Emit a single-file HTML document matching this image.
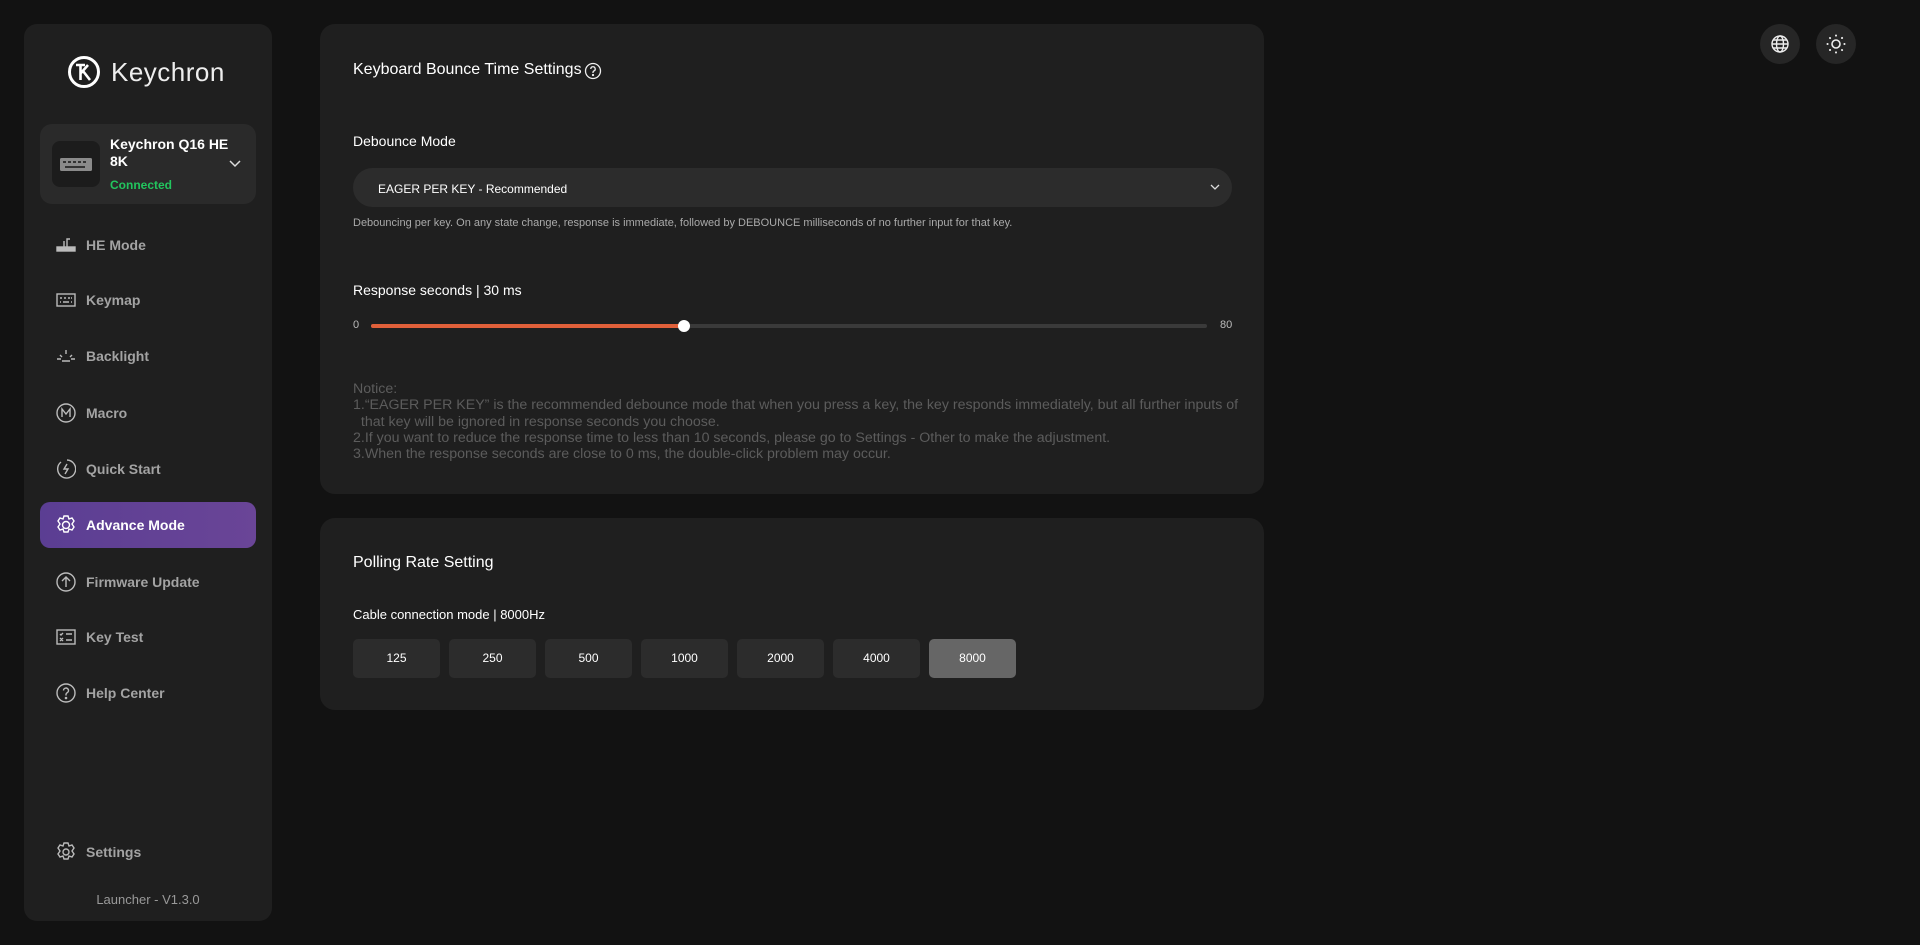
<!DOCTYPE html>
<html><head><meta charset="utf-8"><style>
*{box-sizing:border-box;margin:0;padding:0}
body{width:1920px;height:945px;background:#121212;font-family:"Liberation Sans",sans-serif;color:#fff;position:relative;overflow:hidden}
.side{position:absolute;left:24px;top:24px;width:248px;height:897px;background:#1f1f1f;border-radius:13px}
.logo{position:absolute;left:67px;top:55px;display:flex;align-items:center}
.logo span{font-size:26px;color:#eee;margin-left:10px;letter-spacing:.5px}
.dev{position:absolute;left:40px;top:124px;width:216px;height:80px;background:#2a2a2a;border-radius:12px}
.devic{position:absolute;left:12px;top:17px;width:48px;height:46px;background:#1c1c1c;border-radius:8px}
.devt{position:absolute;left:70px;top:12px;font-size:14px;font-weight:bold;line-height:17px}
.conn{position:absolute;left:70px;top:54px;font-size:12px;font-weight:bold;color:#22c55e}
.nav{position:absolute;left:40px;width:216px;height:46px;display:flex;align-items:center;padding-left:16px;font-size:14px;font-weight:bold;color:#a3a3a3}
.nav svg{width:20px;height:20px;margin-right:10px;flex:none}
.nav.act{background:linear-gradient(90deg,#5b3e93,#6a4597);color:#fff;border-radius:10px}
.card{position:absolute;left:320px;width:944px;background:#1f1f1f;border-radius:15px}
.t16{position:absolute;font-size:16px}
.t14{position:absolute;font-size:14px}
.sel{position:absolute;left:33px;top:144px;width:879px;height:39px;background:#2c2c2c;border-radius:20px;font-size:12px;padding:14px 0 0 25px}
.btn{position:absolute;top:121px;width:87px;height:39px;background:#2c2c2c;border-radius:5px;font-size:12px;text-align:center;line-height:39px}
.circ{position:absolute;top:24px;width:40px;height:40px;border-radius:50%;background:#262626;display:flex;align-items:center;justify-content:center}
</style></head><body>
<div class="side">
</div>
<div class="logo">
<svg width="34" height="34" viewBox="0 0 34 34"><circle cx="17" cy="17" r="14.5" fill="none" stroke="#fff" stroke-width="3"/><path d="M9 10h9M13.5 10v15M14 18l7-8M16 16l7 9" stroke="#fff" stroke-width="2.6" fill="none"/></svg>
<span>Keychron</span></div>
<div class="dev"><div class="devic"><svg width="48" height="46" viewBox="0 0 48 46"><rect x="8" y="17" width="32" height="13" rx="1.5" fill="#8a8a8a"/><g fill="#333"><rect x="11" y="20" width="3" height="2"/><rect x="16" y="20" width="3" height="2"/><rect x="21" y="20" width="3" height="2"/><rect x="26" y="20" width="3" height="2"/><rect x="31" y="20" width="3" height="2"/><rect x="13" y="25" width="20" height="2"/></g></svg></div>
<div class="devt">Keychron Q16 HE<br>8K</div><div class="conn">Connected</div>
<svg style="position:absolute;left:189px;top:36px" width="12" height="8" viewBox="0 0 12 8"><path d="M1 1l5 5 5-5" stroke="#ddd" stroke-width="1.5" fill="none"/></svg></div>

<div class="nav" style="top:222px"><svg viewBox="0 0 20 20" fill="none" stroke="#bbb" stroke-width="1.4"><rect x="1" y="12" width="18" height="4" fill="#bbb"/><path d="M8 12V6M11 12V4h3"/></svg>HE Mode</div>
<div class="nav" style="top:277px"><svg viewBox="0 0 20 20" fill="none" stroke="#bbb" stroke-width="1.4"><rect x="1" y="4" width="18" height="12"/><path d="M4 8h2M8 8h2M12 8h2M15 8h1M4 12h1M7 12h6M15 12h1"/></svg>Keymap</div>
<div class="nav" style="top:333px"><svg viewBox="0 0 20 20" fill="none" stroke="#bbb" stroke-width="1.4"><path d="M10 4v4M4 9l2 2M16 9l-2 2M1 13h4M15 13h4M6 15h8"/></svg>Backlight</div>
<div class="nav" style="top:390px"><svg viewBox="0 0 20 20" fill="none" stroke="#bbb" stroke-width="1.4"><circle cx="10" cy="10" r="9"/><path d="M6 14V6l4 5 4-5v8"/></svg>Macro</div>
<div class="nav" style="top:446px"><svg viewBox="0 0 20 20" fill="none" stroke="#bbb" stroke-width="1.4"><path d="M5 3a9 9 0 1 0 6-2"/><path d="M11 5l-3 5h4l-3 5"/></svg>Quick Start</div>
<div class="nav act" style="top:502px"><svg viewBox="0 0 20 20" fill="none" stroke="#fff" stroke-width="1.4"><path d="M8 1h4l1 3 3-1 2 3-2 3 2 3-2 3-3-1-1 3H8l-1-3-3 1-2-3 2-3-2-3 2-3 3 1z"/><circle cx="10" cy="10" r="3.5"/></svg>Advance Mode</div>
<div class="nav" style="top:559px"><svg viewBox="0 0 20 20" fill="none" stroke="#bbb" stroke-width="1.4"><circle cx="10" cy="10" r="9"/><path d="M10 15V5M6 9l4-4 4 4"/></svg>Firmware Update</div>
<div class="nav" style="top:614px"><svg viewBox="0 0 20 20" fill="none" stroke="#bbb" stroke-width="1.4"><rect x="1" y="3" width="18" height="14"/><path d="M4 7l1 1 2-2M4 11l3 3M7 11l-3 3M10 7h6M10 13h6"/></svg>Key Test</div>
<div class="nav" style="top:670px"><svg viewBox="0 0 20 20" fill="none" stroke="#bbb" stroke-width="1.4"><circle cx="10" cy="10" r="9"/><path d="M7.5 7.5a2.5 2.5 0 1 1 3.5 2.3c-.7.4-1 .9-1 1.7v1"/><circle cx="10" cy="15" r=".6" fill="#bbb"/></svg>Help Center</div>
<div class="nav" style="top:829px"><svg viewBox="0 0 20 20" fill="none" stroke="#bbb" stroke-width="1.4"><path d="M8 1h4l1 3 3-1 2 3-2 3 2 3-2 3-3-1-1 3H8l-1-3-3 1-2-3 2-3-2-3 2-3 3 1z"/><circle cx="10" cy="10" r="3"/></svg>Settings</div>
<div style="position:absolute;left:24px;width:248px;top:892px;text-align:center;font-size:13px;color:#999">Launcher - V1.3.0</div>

<div class="card" style="top:24px;height:470px">
<div class="t16" style="left:33px;top:37px">Keyboard Bounce Time Settings</div>
<svg style="position:absolute;left:264px;top:38px" width="18" height="18" viewBox="0 0 18 18" fill="none" stroke="#eee" stroke-width="1.3"><circle cx="9" cy="9" r="7.5"/><path d="M6.8 7a2.2 2.2 0 1 1 3 2c-.6.3-.8.7-.8 1.4v.6"/><circle cx="9" cy="13" r=".5" fill="#eee"/></svg>
<div class="t14" style="left:33px;top:109px">Debounce Mode</div>
<div class="sel">EAGER PER KEY - Recommended<svg style="position:absolute;right:12px;top:16px" width="10" height="7" viewBox="0 0 10 7"><path d="M1 1l4 4 4-4" stroke="#ddd" stroke-width="1.3" fill="none"/></svg></div>
<div style="position:absolute;left:33px;top:193px;font-size:11px;color:#aaa">Debouncing per key. On any state change, response is immediate, followed by DEBOUNCE milliseconds of no further input for that key.</div>
<div class="t14" style="left:33px;top:258px">Response seconds | 30 ms</div>
<div style="position:absolute;left:33px;top:295px;font-size:11px;color:#bbb">0</div>
<div style="position:absolute;left:51px;top:300px;width:836px;height:4px;background:#3a3a3a;border-radius:2px"></div>
<div style="position:absolute;left:51px;top:300px;width:313px;height:4px;background:#e0603a;border-radius:2px"></div>
<div style="position:absolute;left:358px;top:296px;width:12px;height:12px;background:#fff;border-radius:50%"></div>
<div style="position:absolute;left:900px;top:295px;font-size:11px;color:#bbb">80</div>
<div style="position:absolute;left:33px;top:357px;font-size:14.2px;line-height:16.3px;color:#5c5c5c">Notice:<br>1.“EAGER PER KEY” is the recommended debounce mode that when you press a key, the key responds immediately, but all further inputs of<br>&nbsp;&nbsp;that key will be ignored in response seconds you choose.<br>2.If you want to reduce the response time to less than 10 seconds, please go to Settings - Other to make the adjustment.<br>3.When the response seconds are close to 0 ms, the double-click problem may occur.</div>
</div>

<div class="card" style="top:518px;height:192px">
<div class="t16" style="left:33px;top:36px">Polling Rate Setting</div>
<div style="position:absolute;left:33px;top:89px;font-size:13px">Cable connection mode | 8000Hz</div>
<div class="btn" style="left:33px">125</div><div class="btn" style="left:129px">250</div><div class="btn" style="left:225px">500</div><div class="btn" style="left:321px">1000</div><div class="btn" style="left:417px">2000</div><div class="btn" style="left:513px">4000</div><div class="btn" style="left:609px;background:#666">8000</div>
</div>

<div class="circ" style="left:1760px"><svg width="20" height="20" viewBox="0 0 20 20" fill="none" stroke="#eee" stroke-width="1.4"><circle cx="10" cy="10" r="8"/><ellipse cx="10" cy="10" rx="3.5" ry="8"/><path d="M2 10h16M3 6h14M3 14h14"/></svg></div>
<div class="circ" style="left:1816px"><svg width="20" height="20" viewBox="0 0 20 20" fill="none" stroke="#eee" stroke-width="1.6"><circle cx="10" cy="10" r="4"/><g stroke-width="2" stroke-linecap="round"><path d="M10 1.5v.1M10 18.4v.1M1.5 10h.1M18.4 10h.1M4 4l.1.1M16 16l.1.1M4 16l.1-.1M16 4l.1-.1"/></g></svg></div>
</body></html>
